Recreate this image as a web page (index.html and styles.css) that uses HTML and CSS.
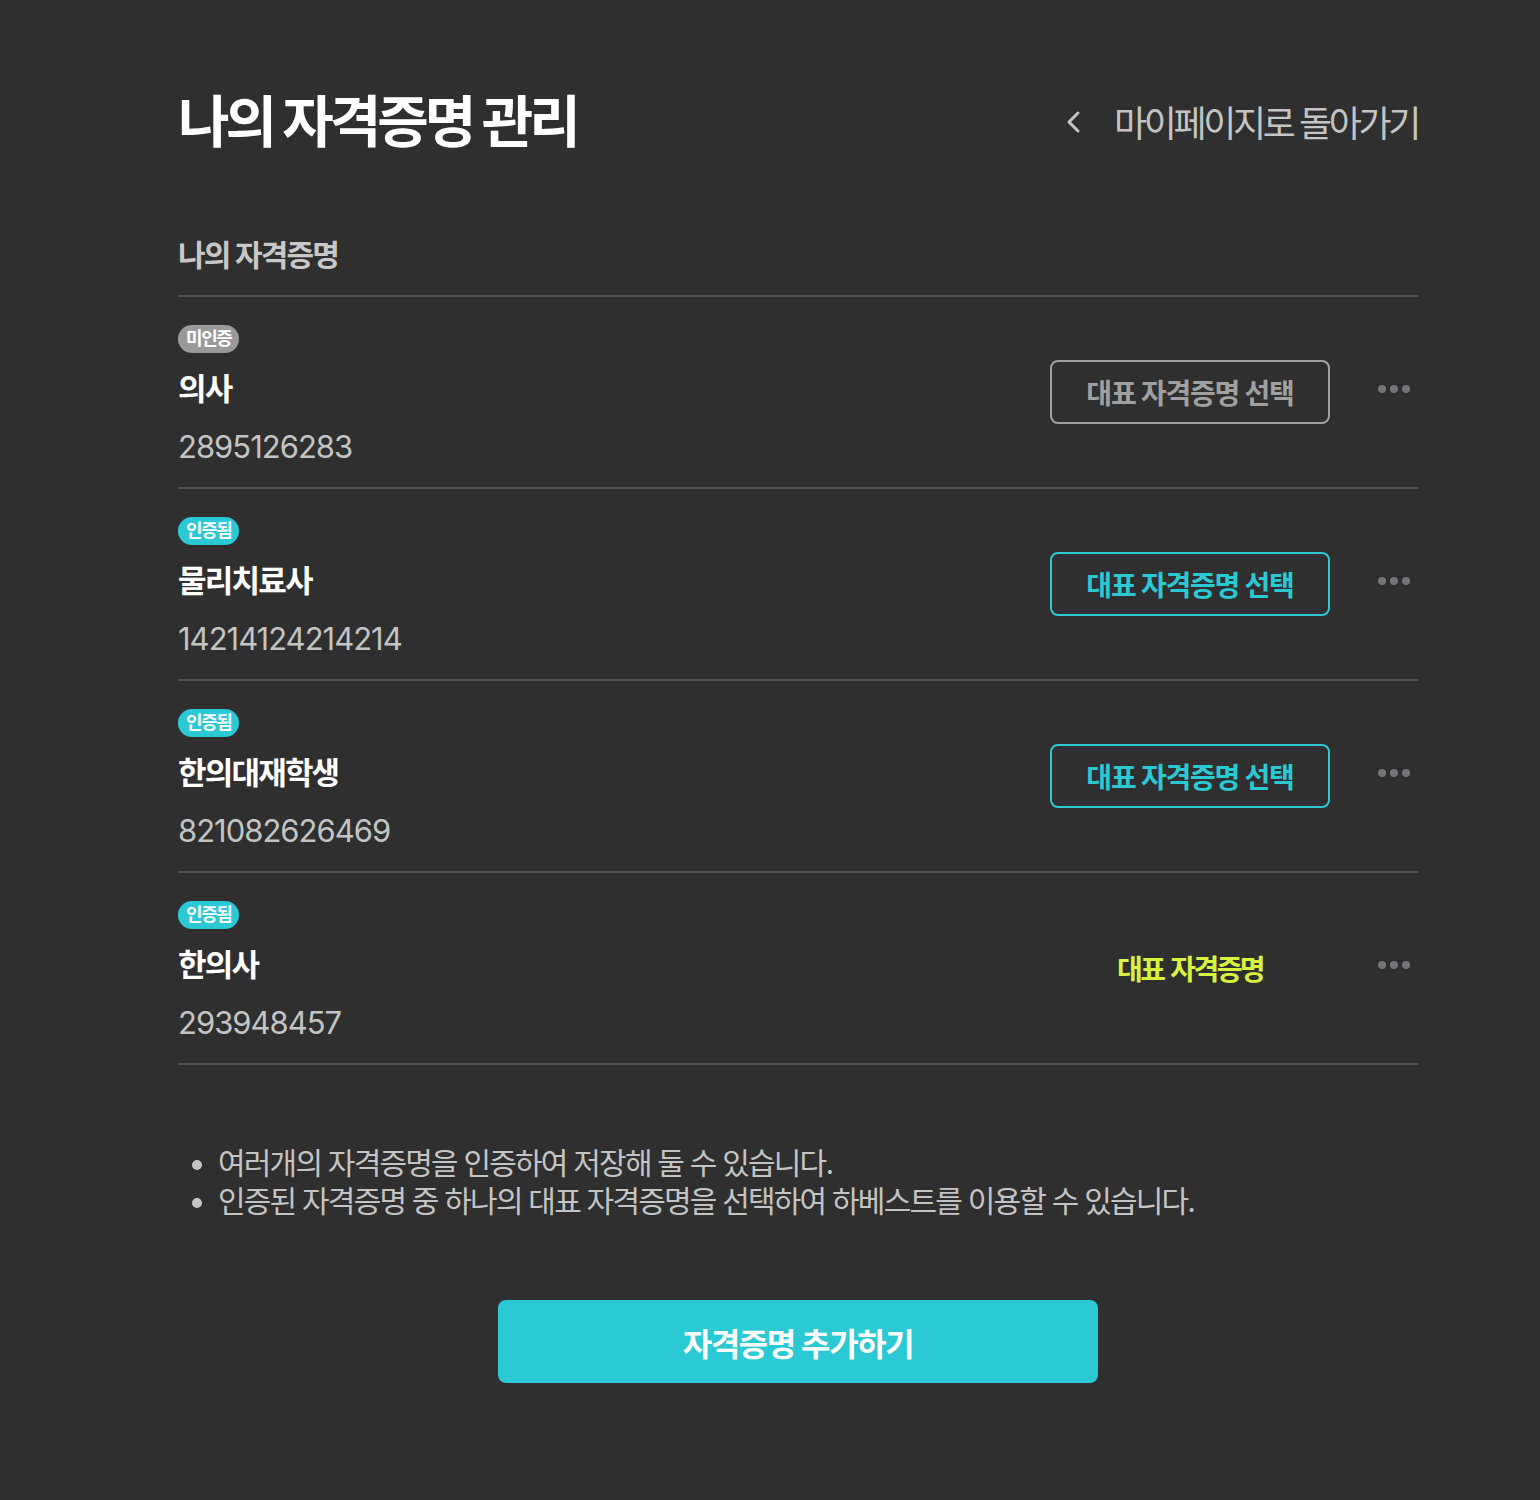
FILE: index.html
```html
<!DOCTYPE html>
<html lang="ko">
<head>
<meta charset="utf-8">
<link rel="stylesheet" href="styles.css">
</head>
<body>
<main class="page">
  <header class="page-head">
    <h1 class="title">나의 자격증명 관리</h1>
    <a class="back" href="#">
      <svg class="chev" width="18" height="28" viewBox="0 0 18 28"><path d="M14 5 L5 14 L14 23" fill="none" stroke="#c4c4c4" stroke-width="3" stroke-linecap="round" stroke-linejoin="round"/></svg>
      <span>마이페이지로 돌아가기</span>
    </a>
  </header>

  <h2 class="section-title">나의 자격증명</h2>

  <ul class="list">
    <li class="item">
      <div class="info">
        <span class="badge badge-gray">미인증</span>
        <div class="name">의사</div>
        <div class="num">2895126283</div>
      </div>
      <div class="action"><button class="select select-gray">대표 자격증명 선택</button></div>
      <div class="more"><i></i><i></i><i></i></div>
    </li>
    <li class="item">
      <div class="info">
        <span class="badge badge-cyan">인증됨</span>
        <div class="name">물리치료사</div>
        <div class="num">14214124214214</div>
      </div>
      <div class="action"><button class="select select-cyan">대표 자격증명 선택</button></div>
      <div class="more"><i></i><i></i><i></i></div>
    </li>
    <li class="item">
      <div class="info">
        <span class="badge badge-cyan">인증됨</span>
        <div class="name">한의대재학생</div>
        <div class="num">821082626469</div>
      </div>
      <div class="action"><button class="select select-cyan">대표 자격증명 선택</button></div>
      <div class="more"><i></i><i></i><i></i></div>
    </li>
    <li class="item">
      <div class="info">
        <span class="badge badge-cyan">인증됨</span>
        <div class="name">한의사</div>
        <div class="num">293948457</div>
      </div>
      <div class="action"><span class="primary">대표 자격증명</span></div>
      <div class="more"><i></i><i></i><i></i></div>
    </li>
  </ul>

  <ul class="notes">
    <li>여러개의 자격증명을 인증하여 저장해 둘 수 있습니다.</li>
    <li>인증된 자격증명 중 하나의 대표 자격증명을 선택하여 하베스트를 이용할 수 있습니다.</li>
  </ul>

  <div class="add-wrap"><button class="add">자격증명 추가하기</button></div>
</main>
</body>
</html>
```

FILE: styles.css
```css
* { box-sizing: border-box; }
html, body { margin: 0; padding: 0; }
body {
  background: #2f2f2f;
  font-family: "Inter", "Noto Sans CJK KR", "Noto Sans", sans-serif;
  color: #fff;
  min-height: 1500px;
}
.page {
  width: 1240px;
  margin-left: 178px;
  padding-top: 82px;
}
.page-head {
  display: flex;
  justify-content: space-between;
  align-items: center;
  height: 80px;
}
.title {
  margin: 0;
  font-size: 56px;
  font-weight: 700;
  letter-spacing: -4px;
  line-height: 78px;
}
.back {
  display: flex;
  align-items: center;
  gap: 32px;
  margin-top: -2px;
  text-decoration: none;
  color: #c4c4c4;
  font-size: 36px;
  letter-spacing: -3.4px;
  font-weight: 400;
}
.chev { margin-top: 2px; }
.section-title {
  margin: 71px 0 0;
  font-size: 30px;
  font-weight: 700;
  color: #c8c8c8;
  letter-spacing: -1.8px;
  line-height: 44px;
  padding-bottom: 18px;
  border-bottom: 2px solid #555;
}
.list { list-style: none; margin: 0; padding: 0; }
.item {
  display: flex;
  align-items: center;
  height: 192px;
  border-bottom: 2px solid #555;
}
.info { flex: 1; display: flex; flex-direction: column; align-items: flex-start; padding-top: 10px; }
.badge {
  display: inline-block;
  height: 28px;
  line-height: 28px;
  padding: 0 8px;
  border-radius: 14px;
  font-size: 18px;
  font-weight: 700;
  color: #fff;
  letter-spacing: -1.4px;
}
.badge-gray { background: #9a9a9a; }
.badge-cyan { background: #2ac9d3; }
.name {
  margin-top: 14px;
  font-size: 31px;
  font-weight: 700;
  letter-spacing: -1.8px;
  line-height: 44px;
}
.num {
  margin-top: 14px;
  font-size: 31px;
  font-weight: 400;
  color: #c4c4c4;
  letter-spacing: -1px;
  line-height: 44px;
}
.action { width: 280px; display: flex; justify-content: center; }
.select {
  width: 280px;
  height: 64px;
  background: transparent;
  border-radius: 8px;
  font-family: inherit;
  font-size: 28px;
  font-weight: 700;
  letter-spacing: -1.2px;
  cursor: pointer;
}
.select-gray { border: 2px solid #a0a0a0; color: #a0a0a0; }
.select-cyan { border: 2px solid #2ac9d3; color: #2ac9d3; }
.primary {
  color: #d8f23e;
  font-size: 28px;
  font-weight: 700;
  letter-spacing: -2.6px;
  word-spacing: 3px;
}
.more {
  width: 88px;
  display: flex;
  justify-content: flex-end;
  gap: 4px;
  padding-right: 8px;
  margin-bottom: 6px;
}
.more i {
  width: 8px; height: 8px; border-radius: 50%;
  background: #75767a;
}
.notes {
  margin: 79px 0 0;
  padding-left: 40px;
  color: #c4c4c4;
  font-size: 30px;
  line-height: 38px;
  letter-spacing: -1.8px;
}
.add-wrap { display: flex; justify-content: center; margin-top: 80px; }
.add {
  width: 600px;
  height: 83px;
  border: 0;
  border-radius: 8px;
  background: #2ac9d3;
  color: #fff;
  font-family: inherit;
  font-size: 32px;
  font-weight: 700;
  letter-spacing: -1.4px;
}
```
